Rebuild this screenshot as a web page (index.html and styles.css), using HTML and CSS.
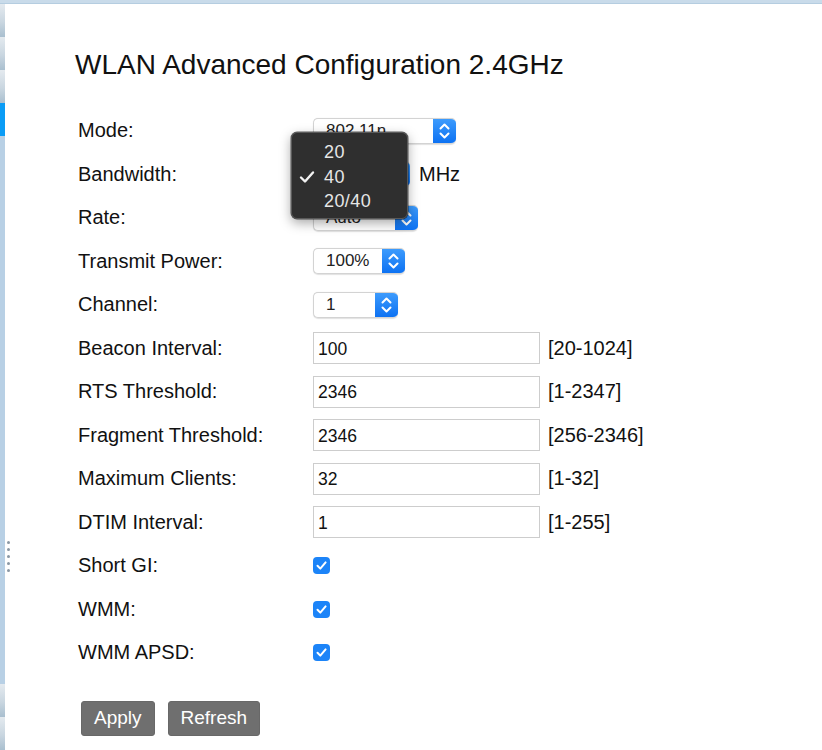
FILE: index.html
```html
<!DOCTYPE html>
<html lang="en">
<head>
<meta charset="utf-8">
<title>WLAN Advanced Configuration 2.4GHz</title>
<link rel="stylesheet" href="styles.css">
</head>
<body>
<div class="frame">
  <div class="topbar"></div>
  <div class="main">
    <nav class="strip">
      <span class="seg"></span>
      <span class="seg"></span>
      <span class="seg"></span>
      <span class="seg active"></span>
      <span class="seg fill"></span>
      <span class="seg"></span>
      <span class="seg"></span>
    </nav>
    <div class="grip"><i></i><i></i><i></i><i></i><i></i></div>
    <section class="content">
      <h1 class="title">WLAN Advanced Configuration 2.4GHz</h1>
      <div class="form">
        <div class="row">
          <label class="label">Mode:</label>
          <div class="ctrl">
            <div class="select w-mode"><span class="val">802.11n</span><span class="arrow"><svg viewBox="0 0 23 26" width="23" height="26"><path d="M7.5 10.5 L11.5 6.5 L15.5 10.5 M7.5 15.5 L11.5 19.5 L15.5 15.5" fill="none" stroke="#fff" stroke-width="2" stroke-linecap="round" stroke-linejoin="round"/></svg></span></div>
          </div>
        </div>
        <div class="row">
          <label class="label">Bandwidth:</label>
          <div class="ctrl bw">
            <div class="select w-bw"><span class="val">40</span><span class="arrow"><svg viewBox="0 0 23 26" width="23" height="26"><path d="M7.5 10.5 L11.5 6.5 L15.5 10.5 M7.5 15.5 L11.5 19.5 L15.5 15.5" fill="none" stroke="#fff" stroke-width="2" stroke-linecap="round" stroke-linejoin="round"/></svg></span></div>
            <span class="unit">MHz</span>
            <ul class="menu">
              <li>20</li>
              <li class="checked"><svg class="tick" viewBox="0 0 16 14" width="16" height="14"><path d="M2 7.5 L6 11.5 L14 2.5" fill="none" stroke="#f2f2f2" stroke-width="2.4" stroke-linecap="round" stroke-linejoin="round"/></svg>40</li>
              <li>20/40</li>
            </ul>
          </div>
        </div>
        <div class="row">
          <label class="label">Rate:</label>
          <div class="ctrl">
            <div class="select w-rate"><span class="val">Auto</span><span class="arrow"><svg viewBox="0 0 23 26" width="23" height="26"><path d="M7.5 10.5 L11.5 6.5 L15.5 10.5 M7.5 15.5 L11.5 19.5 L15.5 15.5" fill="none" stroke="#fff" stroke-width="2" stroke-linecap="round" stroke-linejoin="round"/></svg></span></div>
          </div>
        </div>
        <div class="row">
          <label class="label">Transmit Power:</label>
          <div class="ctrl">
            <div class="select w-power"><span class="val">100%</span><span class="arrow"><svg viewBox="0 0 23 26" width="23" height="26"><path d="M7.5 10.5 L11.5 6.5 L15.5 10.5 M7.5 15.5 L11.5 19.5 L15.5 15.5" fill="none" stroke="#fff" stroke-width="2" stroke-linecap="round" stroke-linejoin="round"/></svg></span></div>
          </div>
        </div>
        <div class="row">
          <label class="label">Channel:</label>
          <div class="ctrl">
            <div class="select w-chan"><span class="val">1</span><span class="arrow"><svg viewBox="0 0 23 26" width="23" height="26"><path d="M7.5 10.5 L11.5 6.5 L15.5 10.5 M7.5 15.5 L11.5 19.5 L15.5 15.5" fill="none" stroke="#fff" stroke-width="2" stroke-linecap="round" stroke-linejoin="round"/></svg></span></div>
          </div>
        </div>
        <div class="row">
          <label class="label">Beacon Interval:</label>
          <div class="ctrl"><input class="text" type="text" value="100"><span class="range">[20-1024]</span></div>
        </div>
        <div class="row">
          <label class="label">RTS Threshold:</label>
          <div class="ctrl"><input class="text" type="text" value="2346"><span class="range">[1-2347]</span></div>
        </div>
        <div class="row">
          <label class="label">Fragment Threshold:</label>
          <div class="ctrl"><input class="text" type="text" value="2346"><span class="range">[256-2346]</span></div>
        </div>
        <div class="row">
          <label class="label">Maximum Clients:</label>
          <div class="ctrl"><input class="text" type="text" value="32"><span class="range">[1-32]</span></div>
        </div>
        <div class="row">
          <label class="label">DTIM Interval:</label>
          <div class="ctrl"><input class="text" type="text" value="1"><span class="range">[1-255]</span></div>
        </div>
        <div class="row">
          <label class="label">Short GI:</label>
          <div class="ctrl"><span class="check"><svg viewBox="0 0 17 17" width="17" height="17"><path d="M4.5 8.8 L7.3 11.6 L12.6 5.4" fill="none" stroke="#fff" stroke-width="2" stroke-linecap="round" stroke-linejoin="round"/></svg></span></div>
        </div>
        <div class="row">
          <label class="label">WMM:</label>
          <div class="ctrl"><span class="check"><svg viewBox="0 0 17 17" width="17" height="17"><path d="M4.5 8.8 L7.3 11.6 L12.6 5.4" fill="none" stroke="#fff" stroke-width="2" stroke-linecap="round" stroke-linejoin="round"/></svg></span></div>
        </div>
        <div class="row">
          <label class="label">WMM APSD:</label>
          <div class="ctrl"><span class="check"><svg viewBox="0 0 17 17" width="17" height="17"><path d="M4.5 8.8 L7.3 11.6 L12.6 5.4" fill="none" stroke="#fff" stroke-width="2" stroke-linecap="round" stroke-linejoin="round"/></svg></span></div>
        </div>
      </div>
      <div class="buttons">
        <button class="btn" type="button">Apply</button>
        <button class="btn" type="button">Refresh</button>
      </div>
    </section>
  </div>
</div>
</body>
</html>
```
FILE: styles.css
```css
* { box-sizing: border-box; }
html, body {
  margin: 0;
  padding: 0;
  background: #fff;
  font-family: "Liberation Sans", Arial, sans-serif;
  color: #111;
}
.frame {
  width: 822px;
  height: 750px;
  overflow: hidden;
  display: flex;
  flex-direction: column;
}
.topbar {
  height: 4px;
  flex: none;
  background: #c9dbea;
  border-bottom: 1px solid #b5cde0;
}
.main {
  flex: 1;
  display: flex;
  position: relative;
}
.strip {
  width: 5px;
  flex: none;
  display: flex;
  flex-direction: column;
}
.seg {
  height: 33px;
  flex: none;
  background: linear-gradient(#e4eaef, #c9d6e0 55%, #a9bfcf);
}
.seg.active { background: #0a9cf6; }
.seg.fill { flex: 1; background: #b8d0e5; }
.grip {
  position: absolute;
  left: 7px;
  top: 537px;
  display: flex;
  flex-direction: column;
  gap: 4px;
}
.grip i {
  width: 3px;
  height: 3px;
  border-radius: 50%;
  background: #8a97a3;
}
.content {
  flex: 1;
  padding: 45px 0 0 70px;
}
.title {
  margin: 0;
  font-size: 28px;
  font-weight: normal;
  line-height: 32px;
  color: #111;
}
.form {
  margin: 28px 0 0 3px;
  display: flex;
  flex-direction: column;
}
.row {
  height: 43.5px;
  display: flex;
  align-items: center;
}
.label {
  width: 235px;
  flex: none;
  font-size: 20px;
  color: #111;
}
.ctrl {
  display: flex;
  align-items: center;
  position: relative;
}
.select {
  height: 26px;
  display: flex;
  align-items: stretch;
  background: #fff;
  border: 1px solid #d3d3d3;
  border-right: none;
  border-radius: 5px;
  box-shadow: 0 0.5px 1px rgba(0,0,0,0.12);
  overflow: hidden;
}
.select .val {
  flex: 1;
  padding-left: 12px;
  font-size: 17px;
  line-height: 24px;
  color: #222;
}
.select .arrow {
  width: 23px;
  flex: none;
  margin-top: -1px;
  margin-bottom: -1px;
  background: linear-gradient(#3f9dfd, #0b70f2);
  display: flex;
  align-items: center;
  justify-content: center;
}
.w-mode { width: 143px; }
.w-bw { width: 97px; }
.w-rate { width: 105px; }
.w-power { width: 92px; }
.w-chan { width: 85px; }
.unit {
  margin-left: 9px;
  font-size: 20px;
}
.menu {
  position: absolute;
  z-index: 10;
  left: -22px;
  top: -29px;
  width: 117px;
  height: 87px;
  margin: 0;
  padding: 7px 0 0 0;
  list-style: none;
  background: #2f2f2f;
  border: 1px solid #5a5a5a;
  border-radius: 6px;
  box-shadow: 0 4px 12px rgba(0,0,0,0.35), 0 0 0 0.5px rgba(0,0,0,0.6);
}
.menu li {
  position: relative;
  height: 24.5px;
  padding-left: 32px;
  font-size: 18px;
  letter-spacing: 0.4px;
  line-height: 24.5px;
  color: #e6e6e6;
}
.menu .tick {
  position: absolute;
  left: 7px;
  top: 5px;
}
.text {
  width: 227px;
  height: 32px;
  margin: 0;
  padding: 2px 4px 0 4px;
  border: 1px solid #cdcdcd;
  border-radius: 0;
  background: #fff;
  font-family: "Liberation Sans", Arial, sans-serif;
  font-size: 17.5px;
  color: #111;
  outline: none;
}
.range {
  margin-left: 8px;
  font-size: 20px;
  color: #111;
}
.check {
  width: 17px;
  height: 17px;
  border-radius: 4px;
  background: #1c84f8;
  display: flex;
}
.buttons {
  margin: 26px 0 0 6px;
  display: flex;
  gap: 13px;
}
.btn {
  height: 35px;
  padding: 0 12px;
  border: 1px solid #686868;
  border-radius: 3px;
  background: #6f6f6f;
  color: #fff;
  font-family: "Liberation Sans", Arial, sans-serif;
  font-size: 19px;
}
```
